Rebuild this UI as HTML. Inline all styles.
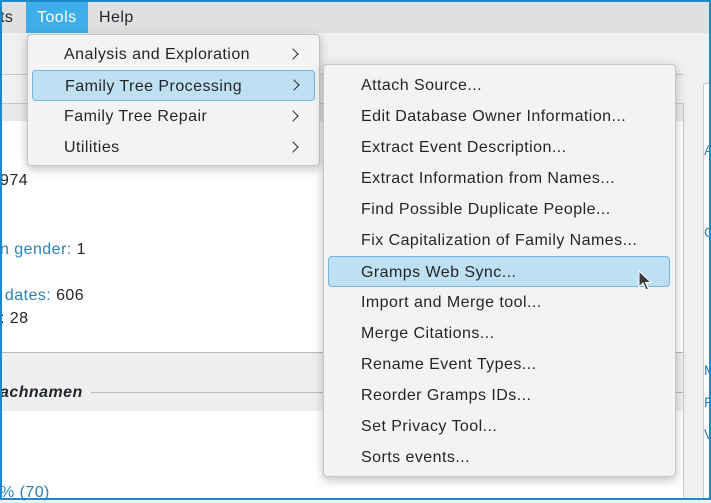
<!DOCTYPE html>
<html><head><style>
*{margin:0;padding:0;box-sizing:border-box}
body{width:711px;height:500px;overflow:hidden;background:#eff0f1;font-family:"Liberation Sans","DejaVu Sans",sans-serif;font-size:16px;letter-spacing:0.45px;color:#232629;position:relative}
.a{position:absolute}
.t{position:absolute;white-space:nowrap;line-height:20px}
.blue{color:#2980b9}
.menu{position:absolute;background:#f3f3f4;border:1px solid #c4c5c7;border-radius:4px;box-shadow:0 3px 10px rgba(0,0,0,.25)}
.it{position:absolute;left:0;right:0;height:31px;line-height:32px;white-space:nowrap}
.hl{background:#bfe0f3;border:1px solid #6fb6e0;border-radius:4px}
.arr{position:absolute;width:8px;height:8px;border-right:1.3px solid #232629;border-top:1.3px solid #232629;transform:rotate(45deg)}
</style></head><body>
<div class="a" style="left:0;top:0;width:711px;height:33px;background:#dfe0e2"></div>
<div class="a" style="left:26px;top:2px;width:62px;height:31px;background:#3daee9"></div>
<div class="t" style="left:0;top:8px">ts</div>
<div class="t" style="left:37px;top:8px;color:#fff">Tools</div>
<div class="t" style="left:99px;top:8px">Help</div>
<div class="a" style="left:0;top:74px;width:684px;height:1px;background:#c8c9cb"></div>
<div class="a" style="left:0;top:103px;width:684px;height:1px;background:#c8c9cb"></div>
<div class="a" style="left:0;top:104px;width:683px;height:17px;background:#e8e9ea"></div>
<div class="a" style="left:0;top:121px;width:683px;height:231px;background:#fff"></div>
<div class="a" style="left:0;top:352px;width:683px;height:1px;background:#b8b9bb"></div>
<div class="a" style="left:0;top:353px;width:683px;height:58px;background:#eeeff1"></div>
<div class="a" style="left:0;top:411px;width:683px;height:89px;background:#fff"></div>
<div class="a" style="left:683px;top:103px;width:1px;height:397px;background:#c8c9cb"></div>
<div class="a" style="left:684px;top:75px;width:27px;height:425px;background:#eff0f1"></div>
<div class="a" style="left:703px;top:83px;width:8px;height:417px;background:#fff;border:1px solid #c8c9cb;border-radius:3px"></div>
<div class="t" style="left:0;top:171px">974</div>
<div class="t" style="left:0;top:240px"><span class="blue">n gender:</span> 1</div>
<div class="t" style="left:0;top:286px"><span class="blue">&nbsp;dates:</span> 606</div>
<div class="t" style="left:0;top:309px">: 28</div>
<div class="t" style="left:0;top:383px;font-weight:bold;font-style:italic">achnamen</div>
<div class="a" style="left:91px;top:392px;width:592px;height:1px;background:#bbb"></div>
<div class="t blue" style="left:0;top:483px">% (70)</div>
<div class="t blue" style="left:704px;top:140px;font-size:14px">A</div>
<div class="t blue" style="left:704px;top:222px;font-size:14px">C</div>
<div class="t blue" style="left:704px;top:360px;font-size:14px">M</div>
<div class="t blue" style="left:704px;top:392px;font-size:14px">F</div>
<div class="t blue" style="left:704px;top:424px;font-size:14px">V</div>

<div class="menu" style="left:27px;top:34px;width:293px;height:132px">
<div class="it" style="top:4px;padding-left:36px">Analysis and Exploration<span class="arr" style="left:261px;top:11px"></span></div>
<div class="it hl" style="top:35px;left:4px;right:4px;padding-left:32px">Family Tree Processing<span class="arr" style="left:257px;top:10px"></span></div>
<div class="it" style="top:66px;padding-left:36px">Family Tree Repair<span class="arr" style="left:261px;top:11px"></span></div>
<div class="it" style="top:97px;padding-left:36px">Utilities<span class="arr" style="left:261px;top:11px"></span></div>
</div>

<div class="menu" style="left:323px;top:64px;width:353px;height:413px">
<div class="it" style="top:5px;padding-left:37px">Attach Source...</div>
<div class="it" style="top:36px;padding-left:37px">Edit Database Owner Information...</div>
<div class="it" style="top:67px;padding-left:37px">Extract Event Description...</div>
<div class="it" style="top:98px;padding-left:37px">Extract Information from Names...</div>
<div class="it" style="top:129px;padding-left:37px">Find Possible Duplicate People...</div>
<div class="it" style="top:160px;padding-left:37px">Fix Capitalization of Family Names...</div>
<div class="it hl" style="top:191px;left:4px;right:5px;padding-left:32px">Gramps Web Sync...</div>
<div class="it" style="top:222px;padding-left:37px">Import and Merge tool...</div>
<div class="it" style="top:253px;padding-left:37px">Merge Citations...</div>
<div class="it" style="top:284px;padding-left:37px">Rename Event Types...</div>
<div class="it" style="top:315px;padding-left:37px">Reorder Gramps IDs...</div>
<div class="it" style="top:346px;padding-left:37px">Set Privacy Tool...</div>
<div class="it" style="top:377px;padding-left:37px">Sorts events...</div>
</div>

<svg class="a" style="left:638px;top:270px" width="16" height="24" viewBox="0 0 16 24"><path d="M1 1 L1 17 L5 13 L8 20 L10.5 19 L7.5 12.5 L13 12.5 Z" fill="#3b3b3b" stroke="#fff" stroke-width="1"/></svg>

<div class="a" style="left:0;top:0;width:711px;height:2px;background:#1e88c8"></div>
<div class="a" style="left:0;top:0;width:2px;height:500px;background:#1e88c8"></div>
<div class="a" style="left:709px;top:0;width:2px;height:500px;background:#1e88c8"></div>
<div class="a" style="left:0;top:498px;width:711px;height:2px;background:#1e88c8"></div>
</body></html>
